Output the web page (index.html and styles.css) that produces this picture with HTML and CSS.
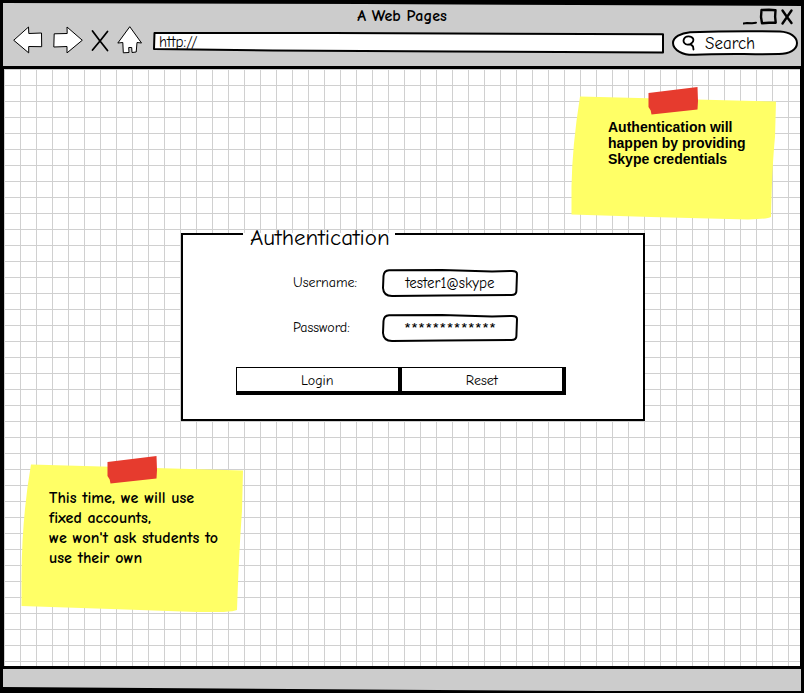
FILE: index.html
```html
<!DOCTYPE html>
<html lang="en">
<head>
<meta charset="utf-8">
<meta name="viewport" content="width=device-width, initial-scale=1">
<title>A Web Pages</title>
<link rel="stylesheet" href="styles.css">
</head>
<body>
<header class="chrome">
  <div class="titlebar">
    <h1 class="title">A Web Pages</h1>
    <div class="controls">
      <button class="icon" type="button" aria-label="Minimize"><svg width="16" height="18" viewBox="0 0 16 18"><path d="M.5 15.500 4 15l5 .2 4-.5" stroke-width="2"/></svg></button>
      <button class="icon" type="button" aria-label="Maximize"><svg width="20" height="18" viewBox="0 0 20 18"><path d="M2.500 2 10 1.700l6.500.5-.4 6.500.6 6-6.700.1-7 .5L2 9z" stroke-width="2.400"/></svg></button>
      <button class="icon" type="button" aria-label="Close"><svg width="16" height="18" viewBox="0 0 16 18"><path d="M3.500 2.500 8 9l4.500 6M12.500 2.500 8 9l-4.500 6.500" stroke-width="2.400"/></svg></button>
    </div>
  </div>
  <nav class="toolbar">
    <button class="icon" type="button" aria-label="Back"><svg width="30" height="28" viewBox="0 0 30 28"><path class="fill" d="M1 14 15.500 1l.3 6.500 12.700-.5.2 13.700-13-.2v6z"/></svg></button>
    <button class="icon" type="button" aria-label="Forward"><svg width="30" height="28" viewBox="0 0 30 28"><path class="fill" d="M29 14 14 1l.2 6.500-13 .3L.8 21 14 20.500v6z"/></svg></button>
    <button class="icon stop" type="button" aria-label="Stop"><svg width="18" height="28" viewBox="0 0 18 28"><path d="M1.500 5 9 15l7.500 9.500M16.500 5.500 9 15l-7.500 9" stroke-width="1.800"/></svg></button>
    <button class="icon" type="button" aria-label="Home"><svg width="26" height="28" viewBox="0 0 26 28"><path class="fill" d="M13 1 24.500 17l-4.500-.5-.8 9.500-4.200.5-.3-5h-3l.3 5-5.700.3-.5-10.300L1.200 17z"/></svg></button>
    <label class="sketch url">
      <svg class="frame" viewBox="0 0 512 24" preserveAspectRatio="none"><path d="M1.500 3 180 3 511 4.200V22.500L300 21.500 120 20.500 1 19z"/></svg>
      <input type="text" value="http://" aria-label="Address">
    </label>
    <label class="sketch search">
      <svg class="frame" viewBox="0 0 126 26" preserveAspectRatio="none"><path d="M18 2.200Q60 .8 108 1.500C118 2 125 7 125 13c0 7-8 11-18 11-30 .5-60-.5-84 .8C11 25.500 1 20 1 13 1 7 9 3 18 2.200z"/></svg>
      <svg class="lens" width="14" height="16" viewBox="0 0 14 16"><path d="M2 4C3 .5 9.500.5 11 3.500c1.500 3-2 6-5 6.200S.5 7 2 4zM8.500 9l2.500 2.500.5 3" stroke-width="1.800"/></svg>
      <input type="text" value="Search" aria-label="Search">
    </label>
  </nav>
</header>

<main class="canvas">
  <aside class="note note-skype">
    <svg class="paper" viewBox="0 0 205 133" preserveAspectRatio="none"><path class="sheet" d="M9 9.500 205 14.500 204 50q-3 30-4 80-3 2-23 2.500L80 130 .5 127.500V100Q1 60 9 9.500z"/></svg>
    <svg class="tape" width="51" height="28" viewBox="0 0 51 28"><path d="M.5 6 49.500 0l.5 14-.5 8.500L3.500 27.500l-.8-4L.500 20z"/></svg>
    <p>Authentication will happen by providing Skype credentials</p>
  </aside>

  <form>
    <fieldset class="login">
      <legend>Authentication</legend>
      <div class="row">
        <label for="user">Username:</label>
        <div class="sketch field">
          <svg class="frame" viewBox="0 0 136 28" preserveAspectRatio="none"><path d="M7 1.200 60 1l50 1.500 20-.5q5 0 5 3l-.6 17q0 4-5 4L60 26.500l-50 .5Q1.500 27 1 19L1.500 7Q2 1.500 7 1.200z"/></svg>
          <input id="user" type="text" value="tester1@skype">
        </div>
      </div>
      <div class="row">
        <label for="pass">Password:</label>
        <div class="sketch field">
          <svg class="frame" viewBox="0 0 136 28" preserveAspectRatio="none"><path d="M7 1.200 60 1l50 1.500 20-.5q5 0 5 3l-.6 17q0 4-5 4L60 26.500l-50 .5Q1.500 27 1 19L1.500 7Q2 1.500 7 1.200z"/></svg>
          <input id="pass" class="masked" type="text" value="*************">
        </div>
      </div>
      <div class="actions">
        <button type="submit">Login</button>
        <button type="reset">Reset</button>
      </div>
    </fieldset>
  </form>

  <aside class="note note-accounts">
    <svg class="paper" viewBox="0 0 222 156" preserveAspectRatio="none"><path class="sheet" d="M10 8.500 222 14.500 221 55q-3 40-5 99-4 2-26 2.500L90 153 .5 150V120Q1 60 10 8.500z"/></svg>
    <svg class="tape" width="51" height="28" viewBox="0 0 51 28"><path d="M.5 6 49.500 0l.5 14-.5 8.500L3.500 27.500l-.8-4L.500 20z"/></svg>
    <p>This time, we will use<br>fixed accounts,<br>we won't ask students to<br>use their own</p>
  </aside>
</main>
<footer class="status"></footer>
</body>
</html>
```
FILE: styles.css
```css
* {
  box-sizing: border-box;
}

body {
  margin: 0;
  padding: 3px 3px 2px;
  min-height: 100vh;
  display: flex;
  flex-direction: column;
  background: #000;
  color: #000;
  font: 14px/20px "Comic Sans MS", "Comic Neue", "Noto Sans", sans-serif;
}

input,
button {
  margin: 0;
  padding: 0;
  border: 0;
  background: none;
  color: inherit;
  font: inherit;
}

svg {
  display: block;
  fill: none;
  stroke: #000;
  stroke-linecap: round;
  stroke-linejoin: round;
}

.fill {
  fill: #fff;
}

/* Browser chrome */
.chrome {
  height: 63px;
  background: #ccc;
  clip-path: polygon(0 0, 45% 1px, 100% 3px, 100% 100%, 0 100%);
}

.titlebar {
  display: grid;
  grid-template-columns: 1fr auto 1fr;
  padding: 3px 6px 0;
}

.title {
  grid-column: 2;
  margin: 0;
  font-size: 16px;
  line-height: 20px;
}

.controls {
  display: flex;
  justify-content: flex-end;
  align-items: flex-end;
}

.toolbar {
  display: flex;
  align-items: flex-end;
  gap: 10px;
  padding: 0 3px 0 10px;
}

.stop {
  margin: 0 -2px;
}

.sketch {
  position: relative;
  display: flex;
  align-items: center;
}

.frame {
  position: absolute;
  inset: 0;
  width: 100%;
  height: 100%;
}

.frame path {
  fill: #fff;
  stroke-width: 2;
}

.sketch input {
  position: relative;
  width: 100%;
  min-width: 0;
  outline: 0;
  font-size: 15px;
}

.url {
  flex: 1;
  height: 24px;
  margin-right: -2px;
}

.url input {
  height: 20px;
  padding: 0 6px;
}

.search {
  width: 126px;
  height: 26px;
  margin-bottom: -2px;
  padding-left: 10px;
  gap: 9px;
}

.lens {
  position: relative;
  flex: none;
}

.search input {
  padding-top: 2px;
  font-size: 17px;
}

/* Page canvas */
.canvas {
  flex: 1;
  display: flex;
  flex-direction: column;
  margin: 3px 1px;
  padding-top: 18px;
  background-color: #fff;
  background-image:
    linear-gradient(to right, #d0d0d0 1px, transparent 1px),
    linear-gradient(to bottom, #d0d0d0 1px, transparent 1px);
  background-size: 16px 16px;
}

.note {
  position: relative;
  font-weight: bold;
}

.note p {
  position: relative;
  margin: 0;
}

.paper {
  position: absolute;
  inset: 0;
  width: 100%;
  height: 100%;
}

.sheet {
  fill: #ffff66;
  stroke: none;
}

.tape {
  position: absolute;
  top: 0;
  fill: #e63b2e;
  stroke: none;
}

.note-skype {
  align-self: flex-end;
  width: 205px;
  min-height: 133px;
  margin-right: 24px;
  padding: 32px 24px 24px 37px;
  font-family: "Liberation Sans", Arial, sans-serif;
  line-height: 16px;
}

.note-skype .tape {
  left: 77px;
}

.note-accounts {
  width: 222px;
  min-height: 156px;
  margin: 35px 0 32px 17px;
  padding: 32px 12px 24px 28px;
  font-size: 16px;
}

.note-accounts .tape {
  left: 86px;
}

/* Login form */
.login {
  min-width: 0;
  margin: 0 155px 0 177px;
  padding: 21px 0 24px;
  border: 2px solid #000;
  background: #fff;
}

.login legend {
  margin-left: 60px;
  padding: 8px 5px 0 7px;
  font-size: 23px;
  line-height: 20px;
}

.row {
  display: flex;
  align-items: center;
  margin-bottom: 17px;
  padding-left: 110px;
}

.row label {
  width: 89px;
}

.field {
  width: 136px;
  height: 28px;
}

.field input {
  text-align: center;
}

.field .masked {
  padding-top: 4px;
  font-size: 18px;
}

.actions {
  display: flex;
  margin: 25px 77px 0 53px;
}

.actions button {
  flex: 1;
  height: 28px;
  padding-top: 2px;
  border: solid #000;
  border-width: 1px 4px 4px 1px;
}

.actions button + button {
  border-left: 0;
}

/* Status bar */
.status {
  height: 22px;
  background: #ccc;
  clip-path: polygon(0 0, 100% 0, 100% 100%, 75% 100%, 0 18px);
}
```
